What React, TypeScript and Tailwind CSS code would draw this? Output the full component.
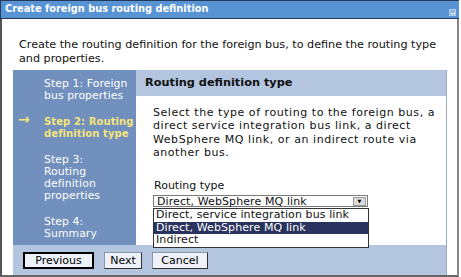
const font = { fontFamily: '"DejaVu Sans", Verdana, sans-serif' }

function Step({ lines, active = false }: { lines: string[]; active?: boolean }) {
  return (
    <div className="relative">
      {active && <span className="absolute left-[-26px] top-[-3px] text-[14px] font-bold text-[#f5e47a]">→</span>}
      <div className={active ? 'font-bold text-[#f5e47a] text-[10px]' : 'text-white'}>
        {lines.map((l) => (
          <div key={l}>{l}</div>
        ))}
      </div>
    </div>
  )
}

function Btn({ label, w, primary = false }: { label: string; w: string; primary?: boolean }) {
  return (
    <button
      className={`${w} h-[17px] bg-[#eef1f8] text-[11px] text-black leading-none flex items-center justify-center ${
        primary ? 'border-2 border-black' : 'border border-[#8a96ad] border-b-[#333] border-r-[#333]'
      }`}
    >
      {label}
    </button>
  )
}

export default function App() {
  return (
    <div className="w-[461px] h-[277px] bg-white overflow-hidden text-[#111]" style={font}>
      <div className="w-[459px] h-[19px] bg-[#5893d4] border-t border-l border-b border-[#23395a] flex items-center justify-between pl-[4px] pr-[3px]">
        <span className="text-white font-bold text-[9.8px]">Create foreign bus routing definition</span>
        <span className="w-[7px] h-[7px] mt-[5px] bg-[#8db4e2] border border-[#b5cfee] flex items-end justify-center">
          <span className="w-[4px] h-[1px] bg-white mb-[1px]" />
        </span>
      </div>
      <div className="w-[459px] h-[258px] border-l-2 border-r-2 border-b-2 border-l-[#555] border-r-[#888] border-b-[#666] flex flex-col">
        <p className="pl-[17px] pr-[20px] pt-[19px] leading-[14px] text-[11.2px]">
          Create the routing definition for the foreign bus, to define the routing type and properties.
        </p>
        <div className="ml-[11px] mt-[4px] w-[434px] flex flex-col">
          <div className="flex h-[175px]">
            <div className="w-[123px] bg-[#7190bd] pl-[31px] pt-[8px] flex flex-col gap-[14px] leading-[12px] text-[10.8px] tracking-[0.1px]">
              <Step lines={['Step 1: Foreign', 'bus properties']} />
              <Step lines={['Step 2: Routing', 'definition type']} active />
              <Step lines={['Step 3:', 'Routing', 'definition', 'properties']} />
              <Step lines={['Step 4:', 'Summary']} />
            </div>
            <div className="flex-1 flex flex-col border-r border-[#9aaac2]">
              <div className="h-[26px] bg-[#b3c5df] flex items-center pl-[9px] font-bold text-[11.3px]">
                Routing definition type
              </div>
              <div className="flex-1 pl-[17px] pr-[4px] pt-[10px] leading-[13.3px] text-[11px]">
                <p className="tracking-[0.55px]">
                  Select the type of routing to the foreign bus, a direct service integration bus link, a direct
                  WebSphere MQ link, or an indirect route via another bus.
                </p>
                <div className="mt-[20px] pl-[1px]">Routing type</div>
                <div className="relative w-[215px] mt-[3px]">
                  <div className="h-[12px] border border-[#7a7a7a] bg-white flex items-center pl-[3px] text-[11px] tracking-[0.1px]">
                    <span className="flex-1">Direct, WebSphere MQ link</span>
                    <span className="w-[13px] h-[9px] mr-[1px] bg-[#dcdcdc] border border-[#999] flex items-center justify-center text-[5px] text-black">
                      ▼
                    </span>
                  </div>
                  <div className="absolute left-0 top-[13px] w-[216px] border border-[#333] bg-white text-[11px] tracking-[0.1px] leading-[12.5px] z-10">
                    <div className="pl-[2px]">Direct, service integration bus link</div>
                    <div className="pl-[2px] bg-[#29335e] text-white">Direct, WebSphere MQ link</div>
                    <div className="pl-[2px]">Indirect</div>
                  </div>
                </div>
              </div>
            </div>
          </div>
          <div className="h-[30px] bg-[#b3c5df] flex items-center gap-[10px] pl-[10px] pt-[1px] border-r border-[#9aaac2]">
            <Btn label="Previous" w="w-[71px]" primary />
            <Btn label="Next" w="w-[38px]" />
            <Btn label="Cancel" w="w-[56px]" />
          </div>
        </div>
      </div>
    </div>
  )
}
